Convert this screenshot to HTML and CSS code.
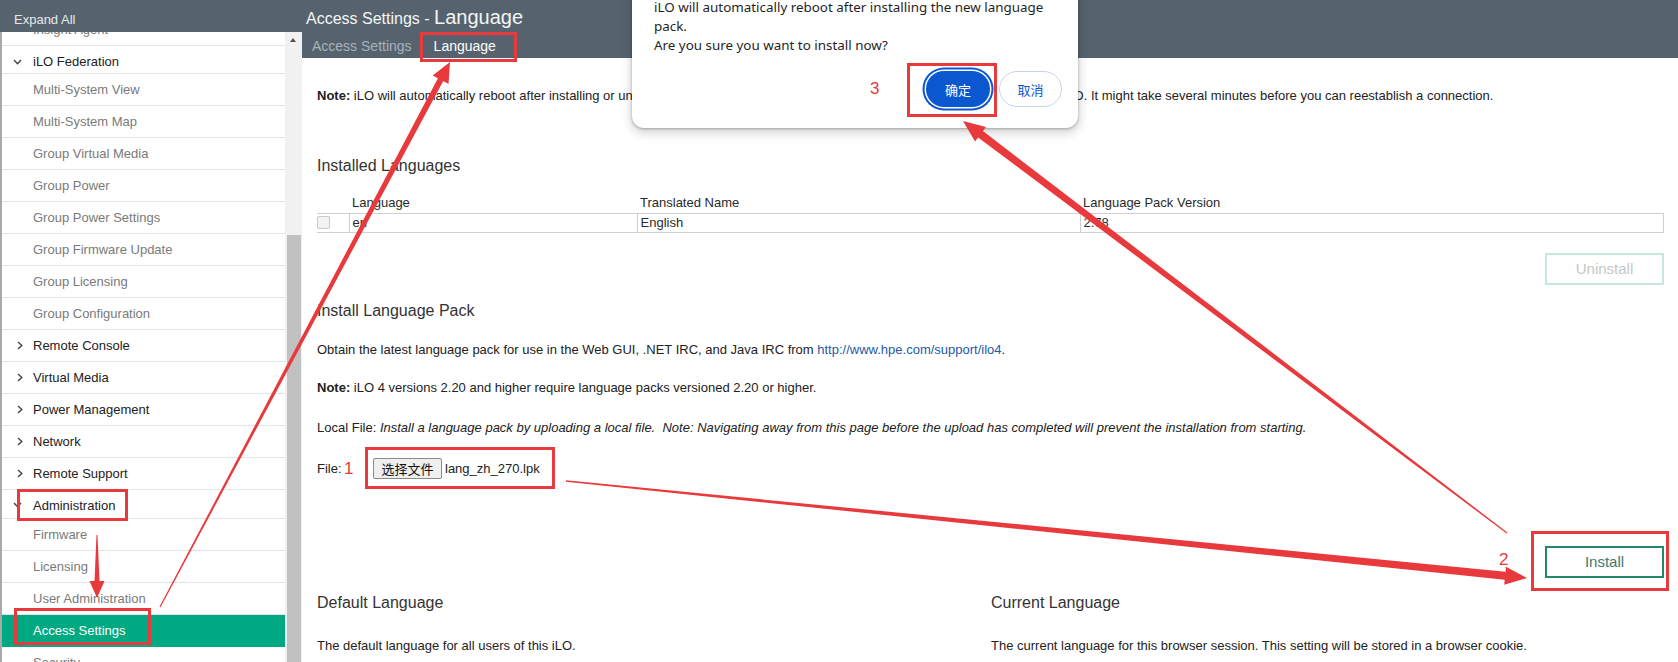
FILE: index.html
```html
<!DOCTYPE html>
<html lang="en">
<head>
<meta charset="utf-8">
<title>Access Settings - Language</title>
<link rel="stylesheet" href="styles.css">
</head>
<body>
<div class="app">
  <aside class="sidebar">
    <div class="side-head">Expand All</div>
    <div class="side-body">
      <ul class="nav">
        <li class="nav-item sub">Insight Agent</li>
        <li class="nav-item top open fed"><span class="ico"><svg width="9" height="6" viewBox="0 0 9 6"><path d="M1 1l3.5 3.8L8 1" fill="none" stroke="#444" stroke-width="1.4"/></svg></span>iLO Federation</li>
        <li class="nav-item sub">Multi-System View</li>
        <li class="nav-item sub">Multi-System Map</li>
        <li class="nav-item sub">Group Virtual Media</li>
        <li class="nav-item sub">Group Power</li>
        <li class="nav-item sub">Group Power Settings</li>
        <li class="nav-item sub">Group Firmware Update</li>
        <li class="nav-item sub">Group Licensing</li>
        <li class="nav-item sub">Group Configuration</li>
        <li class="nav-item top"><span class="ico"><svg class="chev-r" width="6" height="9" viewBox="0 0 6 9"><path d="M1 1l3.8 3.5L1 8" fill="none" stroke="#444" stroke-width="1.4"/></svg></span>Remote Console</li>
        <li class="nav-item top"><span class="ico"><svg class="chev-r" width="6" height="9" viewBox="0 0 6 9"><path d="M1 1l3.8 3.5L1 8" fill="none" stroke="#444" stroke-width="1.4"/></svg></span>Virtual Media</li>
        <li class="nav-item top"><span class="ico"><svg class="chev-r" width="6" height="9" viewBox="0 0 6 9"><path d="M1 1l3.8 3.5L1 8" fill="none" stroke="#444" stroke-width="1.4"/></svg></span>Power Management</li>
        <li class="nav-item top"><span class="ico"><svg class="chev-r" width="6" height="9" viewBox="0 0 6 9"><path d="M1 1l3.8 3.5L1 8" fill="none" stroke="#444" stroke-width="1.4"/></svg></span>Network</li>
        <li class="nav-item top"><span class="ico"><svg class="chev-r" width="6" height="9" viewBox="0 0 6 9"><path d="M1 1l3.8 3.5L1 8" fill="none" stroke="#444" stroke-width="1.4"/></svg></span>Remote Support</li>
        <li class="nav-item top open admin"><span class="ico"><svg width="9" height="6" viewBox="0 0 9 6"><path d="M1 1l3.5 3.8L8 1" fill="none" stroke="#444" stroke-width="1.4"/></svg></span>Administration</li>
        <li class="nav-item sub">Firmware</li>
        <li class="nav-item sub">Licensing</li>
        <li class="nav-item sub">User Administration</li>
        <li class="nav-item sub active">Access Settings</li>
        <li class="nav-item sub">Security</li>
      </ul>
      <div class="scrollbar">
        <div class="sb-track"><span class="sb-arrow"></span></div>
        <div class="sb-thumb"></div>
      </div>
    </div>
  </aside>

  <main class="main">
    <header class="main-head">
      <h1 class="title">Access Settings - <span class="title-big">Language</span></h1>
      <nav class="tabs">
        <span class="tab">Access Settings</span>
        <span class="tab active">Language</span>
      </nav>
    </header>

    <div class="content">
      <p class="note"><b>Note:</b> iLO will automatically reboot after installing or uninstalling a language pack. Any connected users will be disconnected from iLO. It might take several minutes before you can reestablish a connection.</p>

      <h2 class="section-title first">Installed Languages</h2>
      <table class="lang-table">
        <colgroup>
          <col class="c-cb"><col class="c-lang"><col class="c-name"><col>
        </colgroup>
        <thead>
          <tr><th></th><th>Language</th><th>Translated Name</th><th>Language Pack Version</th></tr>
        </thead>
        <tbody>
          <tr><td class="cb-cell"><span class="checkbox"></span></td><td>en</td><td>English</td><td>2.78</td></tr>
        </tbody>
      </table>
      <div class="actions"><button class="btn btn-disabled">Uninstall</button></div>

      <h2 class="section-title pack">Install Language Pack</h2>
      <p class="para p1">Obtain the latest language pack for use in the Web GUI, .NET IRC, and Java IRC from <a class="link" href="#">http://www.hpe.com/support/ilo4</a>.</p>
      <p class="para p2"><b>Note:</b> iLO 4 versions 2.20 and higher require language packs versioned 2.20 or higher.</p>
      <p class="para p3">Local File: <i>Install a language pack by uploading a local file.&nbsp; Note: Navigating away from this page before the upload has completed will prevent the installation from starting.</i></p>
      <div class="file-row">
        <span class="file-label">File:</span>
        <span class="file-input"><span class="file-btn">选择文件</span><span class="file-name">lang_zh_270.lpk</span></span>
      </div>
      <div class="actions install-row"><button class="btn btn-primary">Install</button></div>

      <div class="lang-cols">
        <section>
          <h2 class="section-title">Default Language</h2>
          <p class="para desc">The default language for all users of this iLO.</p>
        </section>
        <section>
          <h2 class="section-title">Current Language</h2>
          <p class="para desc">The current language for this browser session. This setting will be stored in a browser cookie.</p>
        </section>
      </div>
    </div>
  </main>

  <div class="dialog">
    <p class="dlg-msg">iLO will automatically reboot after installing the new language pack.<br>Are you sure you want to install now?</p>
    <div class="dlg-actions">
      <button class="dlg-btn ok">确定</button>
      <button class="dlg-btn cancel">取消</button>
    </div>
  </div>

  <svg class="annot" width="1678" height="662" viewBox="0 0 1678 662">
    <g fill="none" stroke="#e8393c" stroke-width="3">
      <rect x="18.5" y="490.5" width="108" height="29"/>
      <rect x="15.5" y="609.5" width="134" height="34"/>
      <rect x="421.5" y="33.5" width="94" height="27"/>
      <rect x="366.5" y="448.5" width="187" height="39"/>
      <rect x="1532.5" y="532.5" width="135" height="57"/>
      <rect x="908.5" y="64.5" width="87" height="51"/>
    </g>
    <g fill="#e8393c">
      <polygon points="160.53,607.28 443.25,81.06 448.54,83.88 450,62 432.66,75.42 437.95,78.24 159.47,606.72"/>
      <polygon points="565.93,481.70 1504.7,579.8 1504.2,584.8 1527,578 1506.0,566.8 1505.5,571.8 566.07,480.30"/>
      <polygon points="1507.36,532.52 982.96,131.09 985.97,127.11 963,121 975.11,141.45 978.12,137.47 1506.64,533.48"/>
      <polygon points="97.5,535 99.5,581 104.5,581 97,598 89.5,581 94.5,581 96.5,535"/>
    </g>
    <g fill="#e8393c" font-family="Liberation Sans, Arial, sans-serif" font-size="17">
      <text x="344" y="474">1</text>
      <text x="1499" y="565">2</text>
      <text x="870" y="94">3</text>
    </g>
  </svg>
</div>
</body>
</html>
```

FILE: styles.css
```css
* { box-sizing: border-box; }

html, body {
  margin: 0;
  padding: 0;
}

body {
  width: 1678px;
  height: 662px;
  overflow: hidden;
  background: #fff;
  font-family: "Liberation Sans", Arial, sans-serif;
  font-size: 13px;
  color: #222;
}

.app {
  position: relative;
  display: flex;
  width: 1678px;
  height: 662px;
  overflow: hidden;
}

/* ---------- sidebar ---------- */
.sidebar {
  width: 302px;
  flex: none;
  display: flex;
  flex-direction: column;
}

.side-head {
  height: 32px;
  background: #56636e;
  color: #e6e9ec;
  font-size: 13px;
  line-height: 16px;
  padding: 12px 0 0 14px;
}

.side-body {
  flex: 1;
  display: flex;
  overflow: hidden;
}

.nav {
  list-style: none;
  margin: -18px 0 0 0;
  padding: 0;
  width: 285px;
  flex: none;
  border-left: 2px solid #a9a9a9;
  background: #fff;
}

.nav-item {
  display: flex;
  align-items: center;
  height: 32px;
  border-bottom: 1px solid #e3e3e3;
  font-size: 13px;
  white-space: nowrap;
}

.nav-item.sub {
  padding-left: 31px;
  color: #7a7a7a;
}

.nav-item.top {
  padding-left: 11px;
  color: #222;
}

.nav-item.fed {
  height: 28px;
  padding-top: 4px;
}

.nav-item.admin {
  height: 29px;
  padding-top: 2px;
}

.ico {
  width: 20px;
  display: flex;
  align-items: center;
}

.chev-r {
  margin-left: 4px;
}

.nav-item.active {
  background: #01a982;
  color: #fff;
  border-bottom-color: #01a982;
}

.scrollbar {
  width: 17px;
  flex: none;
  display: flex;
  flex-direction: column;
  background: #f1f1f1;
}

.sb-track {
  height: 203px;
  position: relative;
}

.sb-arrow {
  position: absolute;
  left: 5px;
  top: 6px;
  width: 0;
  height: 0;
  border-left: 3.5px solid transparent;
  border-right: 3.5px solid transparent;
  border-bottom: 4px solid #505050;
}

.sb-thumb {
  flex: 1;
  margin: 0 1px 0 2px;
  background: #c1c1c1;
}

/* ---------- main ---------- */
.main {
  flex: 1;
  display: flex;
  flex-direction: column;
  min-width: 0;
}

.main-head {
  height: 58px;
  background: #56636e;
  color: #fff;
}

.title {
  margin: 0;
  padding: 6px 0 0 4px;
  font-weight: normal;
  font-size: 16px;
  line-height: 22px;
  color: #f4f5f6;
  white-space: nowrap;
}

.title-big {
  font-size: 20px;
}

.tabs {
  display: flex;
  margin: 7px 0 0 -1px;
}

.tab {
  padding: 0 11px;
  font-size: 14px;
  line-height: 18px;
  color: #a8b2ba;
}

.tab.active {
  color: #fff;
}

.content {
  padding: 0 14px 0 15px;
}

.note {
  margin: 30px 0 0 0;
  line-height: 16px;
  white-space: nowrap;
}

.section-title {
  margin: 0;
  font-size: 16px;
  font-weight: normal;
  line-height: 20px;
  color: #333;
}

.section-title.first {
  margin-top: 52px;
}

.section-title.pack {
  margin-top: 16px;
}

.lang-table {
  width: 100%;
  margin-top: 18px;
  border-collapse: collapse;
  font-size: 13px;
  color: #2a2a2a;
}

.c-cb { width: 32px; }
.c-lang { width: 288px; }
.c-name { width: 443px; }

.lang-table th {
  font-weight: normal;
  text-align: left;
  padding: 0 3px;
  height: 19px;
  line-height: 16px;
  border-bottom: 1px solid #cfcfcf;
}

.lang-table td {
  padding: 0 3px;
  height: 19px;
  line-height: 16px;
  border-bottom: 1px solid #cfcfcf;
  border-left: 1px solid #cfcfcf;
}

.lang-table td:last-child {
  border-right: 1px solid #cfcfcf;
}

.lang-table td.cb-cell {
  border-left: none;
  padding: 0;
}

.checkbox {
  display: block;
  width: 13px;
  height: 13px;
  border: 1px solid #c9c9c9;
  border-radius: 2px;
  background: #f3f3f3;
}

.actions {
  display: flex;
  justify-content: flex-end;
  margin-top: 20px;
}

.btn {
  width: 119px;
  height: 32px;
  background: #fff;
  font-family: "Liberation Sans", Arial, sans-serif;
  font-size: 15px;
  padding: 0;
}

.btn-disabled {
  border: 2px solid #c5e7de;
  color: #c6c6c6;
}

.btn-primary {
  border: 2px solid #26866c;
  color: #3e7a69;
}

.para {
  margin: 0;
  line-height: 16px;
  white-space: nowrap;
}

.p1 { margin-top: 21px; }
.p2 { margin-top: 22px; }
.p3 { margin-top: 24px; }

.link {
  color: #1d5aa8;
  text-decoration: none;
}

.file-row {
  display: flex;
  align-items: center;
  margin-top: 22px;
  height: 21px;
}

.file-label {
  width: 56px;
}

.file-input {
  display: flex;
  align-items: center;
}

.file-btn {
  display: inline-flex;
  align-items: center;
  justify-content: center;
  width: 69px;
  height: 21px;
  background: #efefef;
  border: 1px solid #8a8a8a;
  border-radius: 2px;
  font-family: "Liberation Sans", "Noto Sans CJK SC", sans-serif;
  font-size: 13px;
  color: #111;
}

.file-name {
  margin-left: 3px;
}

.install-row {
  margin-top: 67px;
}

.lang-cols {
  display: grid;
  grid-template-columns: 674px 1fr;
  margin-top: 15px;
}

.desc {
  margin-top: 25px;
}

/* ---------- dialog (overlay) ---------- */
.dialog {
  position: absolute;
  left: 632px;
  top: -20px;
  width: 446px;
  height: 148px;
  background: #fff;
  border-radius: 12px;
  box-shadow: 0 1px 3px rgba(0, 0, 0, 0.3), 0 4px 8px 3px rgba(0, 0, 0, 0.12);
  padding: 18px 16px 0 22px;
  font-family: "Noto Sans", "Noto Sans CJK SC", sans-serif;
}

.dlg-msg {
  margin: 0;
  font-size: 13.4px;
  line-height: 18.8px;
  color: #1f1f1f;
  width: 404px;
}

.dlg-actions {
  display: flex;
  justify-content: flex-end;
  gap: 9px;
  margin-top: 17px;
}

.dlg-btn {
  height: 36px;
  border-radius: 18px;
  font-family: "Noto Sans CJK SC", sans-serif;
  font-size: 13px;
  padding: 0;
}

.dlg-btn.ok {
  width: 64px;
  background: #0b57d0;
  color: #fff;
  border: none;
  box-shadow: 0 0 0 1.5px #fff, 0 0 0 3.5px #0b57d0;
}

.dlg-btn.cancel {
  width: 63px;
  background: #fff;
  color: #0b57d0;
  border: 1px solid #c7d3ea;
}

/* ---------- annotations (overlay) ---------- */
.annot {
  position: absolute;
  left: 0;
  top: 0;
  pointer-events: none;
}
```
